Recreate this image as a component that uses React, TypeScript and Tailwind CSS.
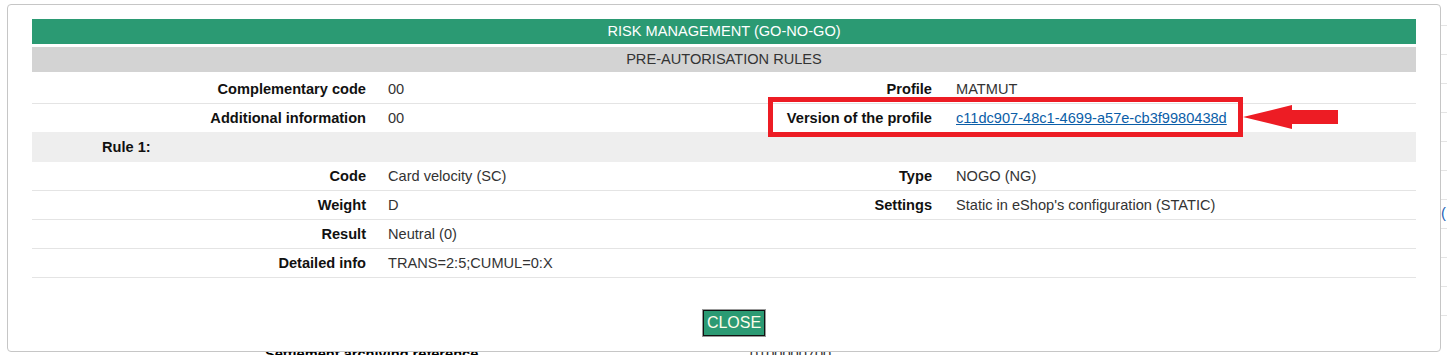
import React from 'react';

type Cell = { label: string; value: string; link?: boolean };

const topRows: [Cell, Cell | null][] = [
  [{ label: 'Complementary code', value: '00' }, { label: 'Profile', value: 'MATMUT' }],
  [
    { label: 'Additional information', value: '00' },
    { label: 'Version of the profile', value: 'c11dc907-48c1-4699-a57e-cb3f9980438d', link: true },
  ],
];

const ruleRows: [Cell, Cell | null][] = [
  [{ label: 'Code', value: 'Card velocity (SC)' }, { label: 'Type', value: 'NOGO (NG)' }],
  [{ label: 'Weight', value: 'D' }, { label: 'Settings', value: "Static in eShop's configuration (STATIC)" }],
  [{ label: 'Result', value: 'Neutral (0)' }, null],
  [{ label: 'Detailed info', value: 'TRANS=2:5;CUMUL=0:X' }, null],
];

const InfoRow: React.FC<{ left: Cell; right: Cell | null; border?: boolean }> = ({
  left,
  right,
  border = true,
}) => (
  <div
    className={`grid grid-cols-[344px_400px_166px_1fr] items-center pt-[2px] ${
      border ? 'h-[29px] border-b border-[#e4e4e4]' : 'h-[28px]'
    }`}
  >
    <div className="whitespace-nowrap pr-[10px] text-right font-bold text-[#111]">{left.label}</div>
    <div className="pl-[12px] text-[#333]">{left.value}</div>
    <div className="whitespace-nowrap pr-[10px] text-right font-bold text-[#111]">{right?.label}</div>
    <div className="pl-[14px] text-[#333]">
      {right &&
        (right.link ? (
          <span className="text-[#0b5ea8] underline">{right.value}</span>
        ) : (
          right.value
        ))}
    </div>
  </div>
);

export default function App() {
  return (
    <div
      className="relative h-[355px] w-[1447px] overflow-hidden bg-white text-[14.6px]"
      style={{ fontFamily: '"Liberation Sans", Arial, sans-serif' }}
    >
      {/* page behind the modal */}
      <div className="ml-[1000px] pt-[25px]">
        {Array.from({ length: 11 }).map((_, i) => (
          <div key={i} className="h-[29px] border-t border-[#e4e4e4]" />
        ))}
      </div>
      <span className="absolute left-[1441px] top-[203px] text-[#1a5fb4]">(</span>
      <div className="absolute left-0 top-[344px] flex w-full">
        <div className="w-[265px]" />
        <div className="w-[485px] font-bold text-black">Settlement archiving reference</div>
        <div className="text-[#333]">0100000700</div>
      </div>

      {/* modal */}
      <div className="absolute left-[7px] top-[4px] h-[348px] w-[1434px] rounded-[4px] border border-[#c6c6c6] bg-white pt-[14px]">
        <div className="ml-[24px] w-[1384px]">
          <div className="flex h-[25px] items-center justify-center bg-[#2b9a73] pt-[1px] text-white">
            RISK MANAGEMENT (GO-NO-GO)
          </div>
          <div className="mt-[3px] flex h-[25px] items-center justify-center bg-[#d3d3d3] pt-[1px] text-[#333]">
            PRE-AUTORISATION RULES
          </div>
          <div className="mt-[3px]">
            <InfoRow left={topRows[0][0]} right={topRows[0][1]} />
            <InfoRow left={topRows[1][0]} right={topRows[1][1]} border={false} />
            <div className="flex h-[30px] items-center bg-[#eeeeee] pl-[70px] pt-[1px] font-bold text-[#111]">
              Rule 1:
            </div>
            {ruleRows.map(([l, r], i) => (
              <InfoRow key={i} left={l} right={r} />
            ))}
          </div>
          <div className="mt-[31px] flex justify-center pl-[20px]">
            <button className="h-[28px] border border-[#999] bg-[#999] p-0">
              <span className="flex h-[26px] w-[62px] items-center justify-center border border-[#111] bg-[#2b9a73] text-[16px] text-[#fdfdea]">
                CLOSE
              </span>
            </button>
          </div>
        </div>
      </div>

      {/* annotation */}
      <div className="absolute left-[768px] top-[97px] h-[40px] w-[475px] border-[5px] border-[#ed1c24]" />
      <svg className="absolute left-[1240px] top-[100px]" width="102" height="34" viewBox="1240 100 102 34">
        <polygon
          points="1243,117 1292,105 1292,110 1338,110 1338,124 1292,124 1292,129"
          fill="#ed1c24"
        />
      </svg>
    </div>
  );
}
